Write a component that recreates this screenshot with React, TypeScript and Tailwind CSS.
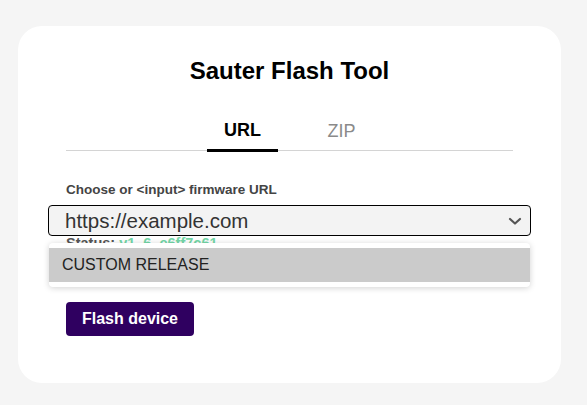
import React from "react";

export default function App() {
  return (
    <div className="min-h-screen bg-[#f5f5f5] pt-[26px] px-[18px] font-['Liberation_Sans',Arial,sans-serif]">
      <div className="w-[543px] h-[357px] bg-white rounded-[24px] pt-[31px] px-[48px]">
        <h1 className="text-center text-[24px] leading-[28px] font-bold text-black">Sauter Flash Tool</h1>
        <div className="mt-[26px] flex justify-center gap-[28px] pl-[5px] border-b border-[#d4d4d4]">
          <div className="w-[71px] h-[41px] -mb-[2px] flex items-center justify-center border-b-[3px] border-black text-[18px] font-bold text-black">URL</div>
          <div className="w-[71px] h-[41px] -mb-[2px] flex items-center justify-center text-[18px] text-[#8a8a8a]">ZIP</div>
        </div>
        <div className="mt-[31px] text-[13.5px] leading-[16px] font-bold text-[#444]">Choose or &lt;input&gt; firmware URL</div>
        <div className="relative mt-[7px] -mx-[18px]">
          <div className="h-[31px] rounded-[4px] border border-black bg-[#f3f3f3] flex items-center justify-between pl-[16px] pr-[8px]">
            <span className="text-[20.5px] leading-[24px] text-[#333]">https://example.com</span>
            <svg width="14" height="10" viewBox="0 0 14 10" className="mt-[1px]">
              <polyline points="2,3 7,7.5 12,3" fill="none" stroke="#555" strokeWidth="2.2" strokeLinecap="round" strokeLinejoin="round" />
            </svg>
          </div>
          <div className="absolute left-[1px] right-[1px] top-[38px] bg-white rounded-[4px] shadow-[0_1px_6px_rgba(0,0,0,0.18)] py-[5px]">
            <div className="h-[34px] bg-[#cbcbcb] flex items-center pl-[13px] text-[16px] text-[#222]">CUSTOM RELEASE</div>
          </div>
        </div>
        <div className="-mt-[1px] text-[14.5px] leading-[16px] font-bold text-[#555]">
          Status: <span className="text-[#74d8a8]">v1_6_e6ff7c61</span>
        </div>
        <button className="mt-[51px] w-[128px] h-[34px] rounded-[4px] bg-[#2f0060] text-white text-[16px] font-bold">Flash device</button>
      </div>
    </div>
  );
}
